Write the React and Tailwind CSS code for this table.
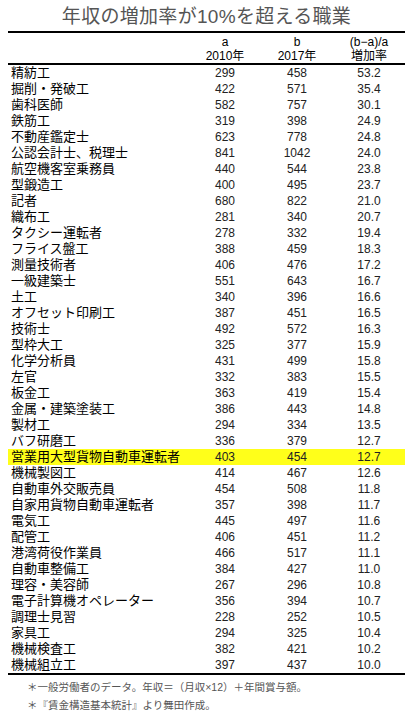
const rows = [
  ['精紡工', 299, 458, '53.2'],
  ['掘削・発破工', 422, 571, '35.4'],
  ['歯科医師', 582, 757, '30.1'],
  ['鉄筋工', 319, 398, '24.9'],
  ['不動産鑑定士', 623, 778, '24.8'],
  ['公認会計士、税理士', 841, 1042, '24.0'],
  ['航空機客室乗務員', 440, 544, '23.8'],
  ['型鍛造工', 400, 495, '23.7'],
  ['記者', 680, 822, '21.0'],
  ['織布工', 281, 340, '20.7'],
  ['タクシー運転者', 278, 332, '19.4'],
  ['フライス盤工', 388, 459, '18.3'],
  ['測量技術者', 406, 476, '17.2'],
  ['一級建築士', 551, 643, '16.7'],
  ['土工', 340, 396, '16.6'],
  ['オフセット印刷工', 387, 451, '16.5'],
  ['技術士', 492, 572, '16.3'],
  ['型枠大工', 325, 377, '15.9'],
  ['化学分析員', 431, 499, '15.8'],
  ['左官', 332, 383, '15.5'],
  ['板金工', 363, 419, '15.4'],
  ['金属・建築塗装工', 386, 443, '14.8'],
  ['製材工', 294, 334, '13.5'],
  ['バフ研磨工', 336, 379, '12.7'],
  ['営業用大型貨物自動車運転者', 403, 454, '12.7', true],
  ['機械製図工', 414, 467, '12.6'],
  ['自動車外交販売員', 454, 508, '11.8'],
  ['自家用貨物自動車運転者', 357, 398, '11.7'],
  ['電気工', 445, 497, '11.6'],
  ['配管工', 406, 451, '11.2'],
  ['港湾荷役作業員', 466, 517, '11.1'],
  ['自動車整備工', 384, 427, '11.0'],
  ['理容・美容師', 267, 296, '10.8'],
  ['電子計算機オペレーター', 356, 394, '10.7'],
  ['調理士見習', 228, 252, '10.5'],
  ['家具工', 294, 325, '10.4'],
  ['機械検査工', 382, 421, '10.2'],
  ['機械組立工', 397, 437, '10.0'],
];

// Liberation Sans first keeps the line boxes tight; the kana/kanji fall through to Noto
const font = { fontFamily: '"Liberation Sans", "Noto Sans CJK JP", sans-serif' };

export default function App() {
  return (
    <div className="w-[413px] h-[718px] bg-white text-black overflow-hidden" style={font}>
      {/* title */}
      <div className="h-[31px] pt-[1px] flex items-center justify-center text-[19px] leading-none text-[#555] tracking-[0.3px]">
        年収の増加率が10%を超える職業
      </div>

      <div className="px-2">
        <div className="border-t-2 border-b-2 border-black">
          {/* header */}
          <div className="grid grid-cols-[181px_72px_72px_72px] h-[30px] pt-[2px] text-[12px] leading-[14px] text-center">
            <div />
            <div><div>a</div><div>2010年</div></div>
            <div><div>b</div><div>2017年</div></div>
            <div><div>(b−a)/a</div><div>増加率</div></div>
          </div>
        </div>

        {/* body */}
        <div className="border-b-2 border-black">
          {rows.map(([name, a, b, r, hl]) => (
            <div key={name}
              className={`grid grid-cols-[181px_72px_72px_72px] h-[16px] items-center ${hl ? 'bg-[#ffff1a]' : ''}`}>
              <div className="pl-[3px] text-[13px] leading-[16px] whitespace-nowrap">{name}</div>
              <div className="text-center text-[12px] leading-[16px] text-[#222]">{a}</div>
              <div className="text-center text-[12px] leading-[16px] text-[#222]">{b}</div>
              <div className="text-center text-[12px] leading-[16px] text-[#222]">{r}</div>
            </div>
          ))}
        </div>
      </div>

      {/* notes */}
      <div className="pl-[27px] pt-[3px] text-[10.5px] leading-[18px] text-[#555]">
        <div>＊一般労働者のデータ。年収＝（月収×12）＋年間賞与額。</div>
        <div>＊『賃金構造基本統計』より舞田作成。</div>
      </div>
    </div>
  );
}
